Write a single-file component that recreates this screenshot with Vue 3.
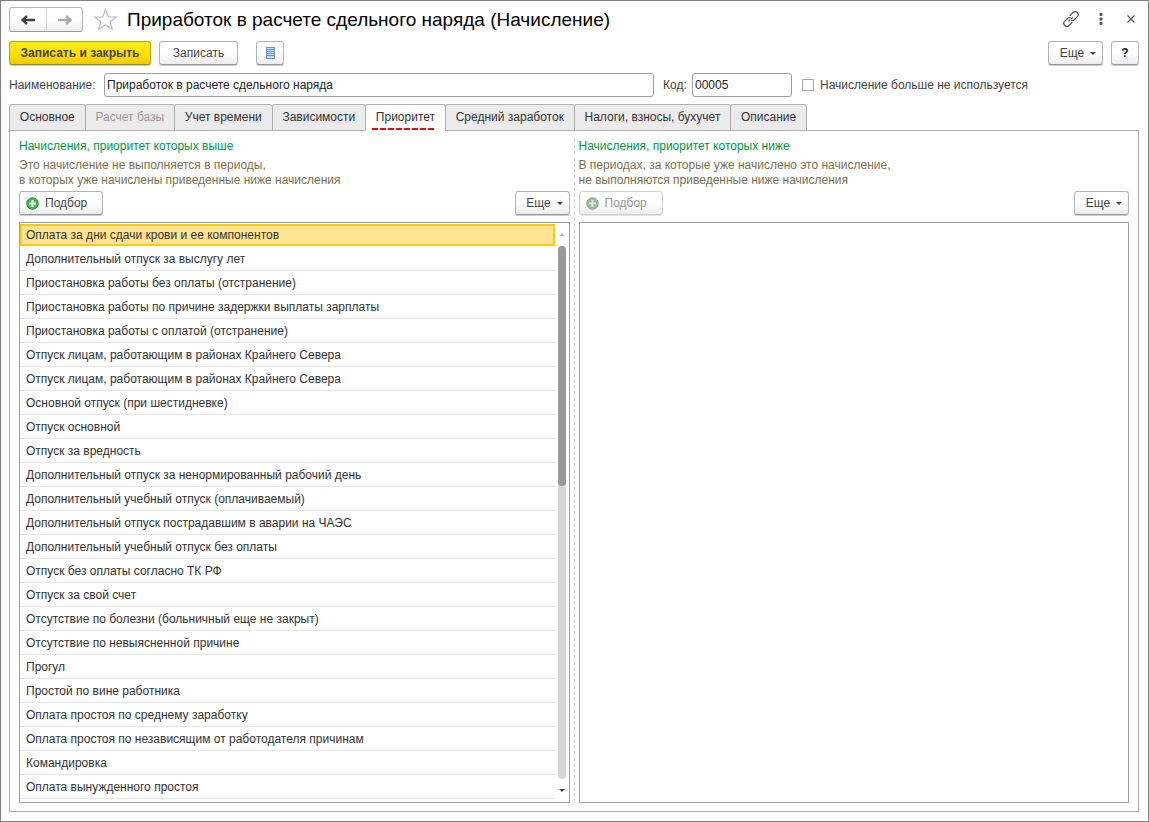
<script setup>
import { ref } from 'vue'

const name = ref('Приработок в расчете сдельного наряда')
const code = ref('00005')
const unused = ref(false)
const activeTab = ref('Приоритет')
const selected = ref(0)

const tabs = [
  { title: 'Основное' },
  { title: 'Расчет базы', disabled: true },
  { title: 'Учет времени' },
  { title: 'Зависимости' },
  { title: 'Приоритет' },
  { title: 'Средний заработок' },
  { title: 'Налоги, взносы, бухучет' },
  { title: 'Описание' },
]

const higher = [
  'Оплата за дни сдачи крови и ее компонентов',
  'Дополнительный отпуск за выслугу лет',
  'Приостановка работы без оплаты (отстранение)',
  'Приостановка работы по причине задержки выплаты зарплаты',
  'Приостановка работы с оплатой (отстранение)',
  'Отпуск лицам, работающим в районах Крайнего Севера',
  'Отпуск лицам, работающим в районах Крайнего Севера',
  'Основной отпуск (при шестидневке)',
  'Отпуск основной',
  'Отпуск за вредность',
  'Дополнительный отпуск за ненормированный рабочий день',
  'Дополнительный учебный отпуск (оплачиваемый)',
  'Дополнительный отпуск пострадавшим в аварии на ЧАЭС',
  'Дополнительный учебный отпуск без оплаты',
  'Отпуск без оплаты согласно ТК РФ',
  'Отпуск за свой счет',
  'Отсутствие по болезни (больничный еще не закрыт)',
  'Отсутствие по невыясненной причине',
  'Прогул',
  'Простой по вине работника',
  'Оплата простоя по среднему заработку',
  'Оплата простоя по независящим от работодателя причинам',
  'Командировка',
  'Оплата вынужденного простоя',
]
</script>

<template>
  <main class="window">
    <header class="titlebar">
      <div class="nav">
        <button type="button" class="nav-btn" aria-label="Назад">
          <svg width="14" height="10" viewBox="0 0 14 10"><path d="M14 5H3M6 1L1.500 5L6 9" fill="none" stroke="#444" stroke-width="2.400" /></svg>
        </button>
        <button type="button" class="nav-btn" aria-label="Вперед">
          <svg width="14" height="10" viewBox="0 0 14 10"><path d="M0 5H11M8 1L12.500 5L8 9" fill="none" stroke="#aaa" stroke-width="2.400" /></svg>
        </button>
      </div>
      <button type="button" class="star" aria-label="В избранное">
        <svg width="25" height="23" viewBox="0 0 25 23"><path d="M12.500 1.500L15.300 9H23.300L17 13.700L19.300 21.300L12.500 16.700L5.700 21.300L8 13.700L1.700 9H9.700Z" fill="#fff" stroke="#b0bac4" stroke-width="1.100" /></svg>
      </button>
      <h1>Приработок в расчете сдельного наряда (Начисление)</h1>
      <div class="window-tools">
        <button type="button" class="icon-btn" aria-label="Получить ссылку">
          <svg width="16" height="16" viewBox="1 1 16 16" fill="none" stroke="#555" stroke-width="1.200" stroke-linecap="round">
            <path d="M8 5.500L11 2.500C12.200 1.400 14 1.400 15.200 2.500C16.500 3.700 16.500 5.500 15.400 6.700L12.300 9.700C11.600 10.400 10.600 10.600 9.700 10.300" />
            <path d="M10 12.500L7 15.500C5.800 16.600 4 16.600 2.800 15.500C1.500 14.300 1.500 12.500 2.600 11.300L5.700 8.300C6.400 7.600 7.400 7.400 8.300 7.700" />
            <path d="M6.800 11.200L11.200 6.800" stroke-dasharray="2 1.500" />
          </svg>
        </button>
        <button type="button" class="icon-btn" aria-label="Меню">
          <svg width="4" height="12" viewBox="0 0 4 12" fill="#555"><rect x=".5" y="0" width="3" height="3" rx="1" /><rect x=".5" y="4.500" width="3" height="3" rx="1" /><rect x=".5" y="9" width="3" height="3" rx="1" /></svg>
        </button>
        <button type="button" class="icon-btn" aria-label="Закрыть">
          <svg width="8" height="8" viewBox="0 0 8 8"><path d="M.5 .5L7.500 7.500M7.500 .5L.5 7.500" stroke="#555" stroke-width="1.200" /></svg>
        </button>
      </div>
    </header>

    <div class="toolbar">
      <button type="button" class="btn primary">Записать и закрыть</button>
      <button type="button" class="btn save">Записать</button>
      <button type="button" class="btn square report" aria-label="Отчеты">
        <svg width="9" height="12" viewBox="0 0 9 12"><path d="M0 0H9V12H0Z" fill="#c6dcee" /><path d="M0 .5H9M0 2.500H9M0 4.500H9M0 6.500H9M0 8.500H9M0 11.500H9M.5 0V12M8.500 0V12" stroke="#6f93b2" /></svg>
      </button>
      <button type="button" class="btn more push">Еще<span class="caret"></span></button>
      <button type="button" class="btn square help">?</button>
    </div>

    <div class="fields">
      <label for="name" class="name-label">Наименование:</label>
      <input id="name" v-model="name" class="text name" type="text">
      <label for="code" class="code-label">Код:</label>
      <input id="code" v-model="code" class="text code" type="text">
      <input id="unused" v-model="unused" class="check" type="checkbox">
      <label for="unused">Начисление больше не используется</label>
    </div>

    <div class="tabs" role="tablist">
      <button
        v-for="tab in tabs"
        :key="tab.title"
        type="button"
        role="tab"
        class="tab"
        :class="{ active: tab.title === activeTab }"
        :aria-selected="tab.title === activeTab"
        :disabled="tab.disabled"
        @click="activeTab = tab.title"
      ><span>{{ tab.title }}</span></button>
    </div>

    <div class="panel" role="tabpanel">
      <section class="pane">
        <h2>Начисления, приоритет которых выше</h2>
        <p>Это начисление не выполняется в периоды,<br>в которых уже начислены приведенные ниже начисления</p>
        <div class="commands">
          <button type="button" class="btn pick">
            <svg width="13" height="13" viewBox="0 0 13 13"><circle cx="6.500" cy="6.500" r="5.800" fill="#45b552" stroke="#21913a" /><path d="M6.500 3V10M3 6.500H10" stroke="#fff" stroke-width="2" /></svg>
            Подбор
          </button>
          <button type="button" class="btn more push">Еще<span class="caret"></span></button>
        </div>
        <div class="grid">
          <div class="rows">
            <table>
              <tbody>
                <tr v-for="(item, i) in higher" :key="i" :class="{ selected: i === selected }" @click="selected = i">
                  <td><div class="cell">{{ item }}</div></td>
                </tr>
              </tbody>
            </table>
          </div>
          <div class="scrollbar">
            <span class="arrow up"></span>
            <div class="track"><div class="thumb"></div></div>
            <span class="arrow down"></span>
          </div>
        </div>
      </section>
      <div class="splitter"></div>
      <section class="pane">
        <h2>Начисления, приоритет которых ниже</h2>
        <p>В периодах, за которые уже начислено это начисление,<br>не выполняются приведенные ниже начисления</p>
        <div class="commands">
          <button type="button" class="btn pick" disabled>
            <svg width="13" height="13" viewBox="0 0 13 13"><circle cx="6.500" cy="6.500" r="5.800" fill="#9cb8a0" stroke="#90ad95" /><path d="M6.500 3V10M3 6.500H10" stroke="#dbe5dc" stroke-width="2" /></svg>
            Подбор
          </button>
          <button type="button" class="btn more push">Еще<span class="caret"></span></button>
        </div>
        <div class="grid"></div>
      </section>
    </div>
  </main>
</template>

<style>
body {
  margin: 0;
  background: #fff;
}
</style>

<style scoped>
* {
  box-sizing: border-box;
}
.window {
  display: flex;
  flex-direction: column;
  height: 100vh;
  padding: 6px 9px 9px 8px;
  border: 1px solid #808080;
  background: #fff;
  color: #444;
  font: 12px/15px "Liberation Sans", Arial, sans-serif;
}
button,
input {
  margin: 0;
  font: inherit;
  color: inherit;
}
svg {
  flex: none;
}
.titlebar {
  display: flex;
  align-items: center;
  height: 25px;
}
.nav {
  display: flex;
  height: 25px;
  border: 1px solid #b4b4b4;
  border-bottom-color: #999;
  border-radius: 3px;
  background: linear-gradient(#fff 50%, #ececec);
}
.nav-btn {
  display: flex;
  align-items: center;
  justify-content: center;
  width: 36px;
  padding: 0;
  border: 0;
  background: none;
}
.nav-btn + .nav-btn {
  border-left: 1px solid #d4d4d4;
}
.star {
  display: flex;
  margin: 0 9px 0 10px;
  padding: 0;
  border: 0;
  background: none;
}
h1 {
  margin: 0;
  color: #000;
  font-size: 19px;
  font-weight: 400;
  line-height: 24px;
  white-space: nowrap;
}
.window-tools {
  display: flex;
  align-items: center;
  gap: 14px;
  margin-left: auto;
  padding-bottom: 2px;
}
.icon-btn {
  display: flex;
  align-items: center;
  justify-content: center;
  width: 16px;
  height: 16px;
  padding: 0;
  border: 0;
  background: none;
}
.toolbar {
  display: flex;
  margin-top: 9px;
}
.btn {
  display: flex;
  align-items: center;
  justify-content: center;
  height: 24px;
  padding: 0 6px;
  border: 1px solid #b4b4b4;
  border-bottom-color: #999;
  border-radius: 3px;
  background: linear-gradient(#fff 50%, #ececec);
  box-shadow: 0 1px #ccc;
  white-space: nowrap;
}
.btn:disabled {
  border-color: #d0d0d0;
  box-shadow: 0 1px #e4e4e4;
  color: #969696;
}
.primary {
  width: 142px;
  border-color: #c0a200;
  border-bottom-color: #a08a00;
  background: linear-gradient(#ffe81f, #ffdf00 60%, #eccb00);
  font-weight: 700;
}
.save {
  width: 79px;
  margin-left: 8px;
}
.square {
  width: 28px;
}
.report {
  margin-left: 18px;
}
.more {
  width: 55px;
  padding-left: 11px;
  gap: 6px;
}
.push {
  margin-left: auto;
}
.caret {
  border: 3px solid transparent;
  border-top-color: #444;
  border-bottom: 0;
}
.help {
  margin-left: 8px;
  color: #222;
  font-weight: 700;
}
.fields {
  display: flex;
  align-items: center;
  margin-top: 8px;
}
.text {
  height: 24px;
  padding: 0 2px;
  border: 1px solid #a0a0a0;
  border-radius: 3px;
  background: #fff;
  color: #222;
}
.name-label {
  width: 90px;
}
.name {
  width: 550px;
  margin-left: 5px;
}
.code-label {
  width: 24px;
  margin-left: 9px;
}
.code {
  width: 100px;
  margin-left: 5px;
}
.check {
  width: 12px;
  height: 12px;
  margin: 0 6px 0 10px;
  border: 1px solid #a8a8a8;
  background: #fff;
  appearance: none;
}
.check:checked {
  background: #777;
}
.tabs {
  position: relative;
  display: flex;
  max-width: 797px;
  margin-top: 7px;
}
.tab {
  flex: 1 0 auto;
  height: 27px;
  padding: 0 9px;
  margin-right: -1px;
  border: 1px solid #b0b0b0;
  border-radius: 3px 3px 0 0;
  background: #ebebeb;
  color: #333;
  white-space: nowrap;
}
.tab:disabled {
  color: #999;
}
.tab.active {
  padding: 0 6px;
  border-bottom-color: #fff;
  background: #fff;
}
.tab.active span {
  display: block;
  height: 25px;
  padding: 0 3px;
  line-height: 25px;
  background: repeating-linear-gradient(90deg, #f00 0 6px, #fff 6px 8px) left bottom / 62px 2px no-repeat;
}
.panel {
  display: flex;
  flex: 1;
  min-height: 0;
  margin-top: -1px;
  padding: 8px 9px;
  border: 1px solid #b0b0b0;
}
.pane {
  display: flex;
  flex: 1 1 0;
  flex-direction: column;
  min-width: 0;
}
.splitter {
  width: 1px;
  margin: 0 4px;
  background: repeating-linear-gradient(#d4d4d4 0 4px, #fff 4px 6px);
}
h2 {
  margin: 0;
  color: #009646;
  font-size: 12px;
  font-weight: 400;
  line-height: 15px;
}
p {
  margin: 4px 0 0;
  color: #7b7250;
}
.commands {
  display: flex;
  margin-top: 3px;
}
.pick {
  justify-content: flex-start;
  width: 84px;
  gap: 6px;
}
.grid {
  display: flex;
  flex: 1;
  min-height: 0;
  margin-top: 7px;
  border: 1px solid #a0a0a0;
}
.rows {
  flex: 1;
  overflow: hidden;
}
table {
  width: 100%;
  border-collapse: collapse;
  color: #333;
}
td {
  padding: 0;
}
.cell {
  height: 24px;
  padding: 1px 6px 0;
  border-bottom: 1px solid #e4e4e4;
  line-height: 23px;
  white-space: nowrap;
}
.selected .cell {
  height: 22px;
  margin: 1px 0;
  padding: 0 4px;
  border: 2px solid #fbc91e;
  background: #ffe591;
  line-height: 18px;
}
.scrollbar {
  display: flex;
  flex-direction: column;
  align-items: center;
  width: 14px;
}
.track {
  flex: 1;
  width: 8px;
  border-radius: 4px;
  background: #d6d6d6;
}
.thumb {
  height: 45%;
  border-radius: 4px;
  background: #999;
}
.arrow {
  border: 3px solid transparent;
}
.up {
  margin: 10px 0;
  border-top: 0;
  border-bottom-color: #bbb;
}
.down {
  margin: 10px 0;
  border-bottom: 0;
  border-top-color: #444;
}
</style>
